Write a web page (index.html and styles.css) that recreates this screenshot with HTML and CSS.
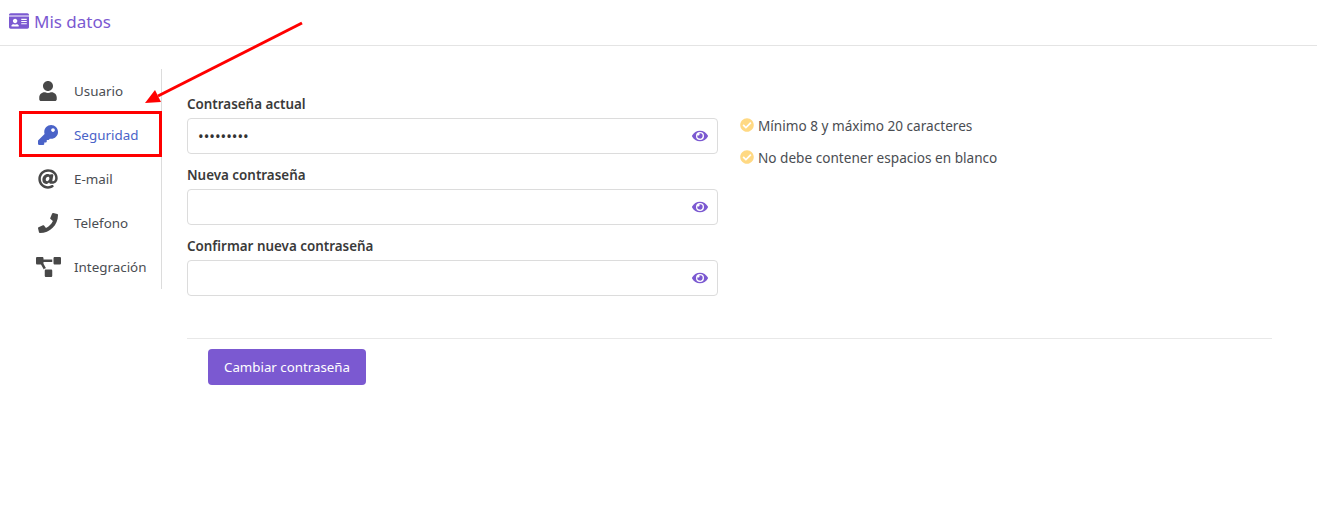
FILE: index.html
```html
<!DOCTYPE html>
<html lang="es">
<head>
    <meta charset="UTF-8">
    <title>Mis datos</title>
    <link rel="stylesheet" href="styles.css">
</head>
<body>
    <header class="page-header">
        <svg class="header-icon" viewBox="0 0 576 512"><path d="M528 32H48C21.5 32 0 53.5 0 80v16h576V80c0-26.5-21.5-48-48-48zM0 432c0 26.5 21.5 48 48 48h480c26.5 0 48-21.5 48-48V128H0v304zm352-232c0-4.4 3.6-8 8-8h144c4.4 0 8 3.6 8 8v16c0 4.4-3.6 8-8 8H360c-4.4 0-8-3.6-8-8v-16zm0 64c0-4.4 3.6-8 8-8h144c4.4 0 8 3.6 8 8v16c0 4.4-3.6 8-8 8H360c-4.4 0-8-3.6-8-8v-16zm0 64c0-4.4 3.6-8 8-8h144c4.4 0 8 3.6 8 8v16c0 4.4-3.6 8-8 8H360c-4.4 0-8-3.6-8-8v-16zM176 192c35.3 0 64 28.7 64 64s-28.7 64-64 64-64-28.7-64-64 28.7-64 64-64zM67.1 396.2C75.5 370.5 99.6 352 128 352h8.2c12.3 5.1 25.7 8 39.8 8s27.6-2.9 39.8-8h8.2c28.4 0 52.5 18.5 60.9 44.2 3.2 9.9-5.2 19.8-15.6 19.8H82.7c-10.4 0-18.8-10-15.6-19.8z"/></svg>
        <span class="header-title">Mis datos</span>
    </header>

    <div class="page-body">
        <nav class="side-menu">
            <a class="menu-item">
                <span class="menu-icon"><svg viewBox="0 0 448 512"><path d="M224 256c70.7 0 128-57.3 128-128S294.7 0 224 0 96 57.3 96 128s57.3 128 128 128zm89.6 32h-16.7c-22.2 10.2-46.9 16-72.9 16s-50.6-5.8-72.9-16h-16.7C60.2 288 0 348.2 0 422.4V464c0 26.5 21.5 48 48 48h352c26.5 0 48-21.5 48-48v-41.6c0-74.2-60.2-134.4-134.4-134.4z"/></svg></span>
                Usuario
            </a>
            <a class="menu-item active">
                <span class="menu-icon"><svg viewBox="0 0 512 512"><path d="M512 176.001C512 273.203 433.202 352 336 352c-11.22 0-22.19-1.062-32.827-3.069l-24.012 27.014A23.999 23.999 0 0 1 261.223 384H224v40c0 13.255-10.745 24-24 24h-40v40c0 13.255-10.745 24-24 24H24c-13.255 0-24-10.745-24-24v-78.059c0-6.365 2.529-12.47 7.029-16.971l161.802-161.802C163.108 213.814 160 195.271 160 176 160 78.798 238.797.001 335.999 0 433.488-.001 512 78.511 512 176.001zM336 128c0 26.51 21.49 48 48 48s48-21.49 48-48-21.49-48-48-48-48 21.49-48 48z"/></svg></span>
                Seguridad
            </a>
            <a class="menu-item">
                <span class="menu-icon"><svg viewBox="0 0 512 512"><path d="M256 8C118.941 8 8 118.919 8 256c0 137.059 110.919 248 248 248 48.154 0 95.342-14.14 135.408-40.223 12.005-7.815 14.625-24.288 5.552-35.372l-10.177-12.433c-7.671-9.371-21.179-11.667-31.373-5.129C325.92 429.757 291.314 440 256 440c-101.458 0-184-82.542-184-184S154.542 72 256 72c100.139 0 184 57.619 184 160 0 38.786-21.093 79.742-58.17 83.693-17.349-.454-16.91-12.857-13.476-30.024l23.433-121.11C394.653 149.75 383.308 136 368.225 136h-44.981a13.518 13.518 0 0 0-13.432 11.993l-.01.092c-14.697-17.901-40.448-21.775-59.971-21.775-74.58 0-137.831 62.234-137.831 151.46 0 65.303 36.785 105.87 96 105.87 26.984 0 57.369-15.637 74.991-38.333 9.522 34.104 40.613 34.103 70.71 34.103C462.609 379.41 504 307.798 504 232 504 95.653 394.023 8 256 8zm-21.68 304.43c-22.249 0-36.07-15.623-36.07-40.771 0-44.993 30.779-72.729 58.63-72.729 22.292 0 35.601 15.241 35.601 40.77 0 45.061-33.875 72.73-58.161 72.73z"/></svg></span>
                E-mail
            </a>
            <a class="menu-item">
                <span class="menu-icon"><svg viewBox="0 0 512 512"><path d="M493.4 24.6l-104-24c-11.3-2.6-22.9 3.3-27.5 13.9l-48 112c-4.2 9.8-1.4 21.3 6.9 28l60.6 49.6c-36 76.7-98.9 140.5-177.2 177.2l-49.6-60.6c-6.8-8.3-18.2-11.1-28-6.9l-112 48C3.9 366.5-2 378.1.6 389.4l24 104C27.1 504.2 36.7 512 48 512c256.1 0 464-207.5 464-464 0-11.2-7.7-20.9-18.6-23.4z"/></svg></span>
                Telefono
            </a>
            <a class="menu-item">
                <span class="menu-icon"><svg class="icon-wide" viewBox="0 0 640 512"><path d="M384 320H256c-17.67 0-32 14.33-32 32v128c0 17.67 14.33 32 32 32h128c17.67 0 32-14.33 32-32V352c0-17.67-14.33-32-32-32zM192 32c0-17.67-14.33-32-32-32H32C14.33 0 0 14.33 0 32v128c0 17.67 14.33 32 32 32h95.72l73.16 128.04C211.98 300.98 232.4 288 256 288h.28L192 175.51V128h224V64H192V32zM608 0H480c-17.67 0-32 14.33-32 32v128c0 17.67 14.33 32 32 32h128c17.67 0 32-14.33 32-32V32c0-17.67-14.33-32-32-32z"/></svg></span>
                Integración
            </a>
        </nav>

        <main class="content">
            <div class="form-row">
                <form class="password-form">
                    <div class="form-group">
                        <label class="form-label">Contraseña actual</label>
                        <div class="input-wrap">
                            <input class="form-input" type="password" value="123456789">
                            <svg class="eye-icon" viewBox="0 0 576 512"><path d="M572.52 241.4C518.29 135.59 410.93 64 288 64S57.68 135.64 3.48 241.41a32.35 32.35 0 0 0 0 29.19C57.71 376.41 165.07 448 288 448s230.32-71.64 284.52-177.41a32.35 32.35 0 0 0 0-29.19zM288 400a144 144 0 1 1 144-144 143.93 143.93 0 0 1-144 144zm0-240a95.31 95.31 0 0 0-25.31 3.79 47.85 47.85 0 0 1-66.9 66.9A95.78 95.78 0 1 0 288 160z"/></svg>
                        </div>
                    </div>
                    <div class="form-group">
                        <label class="form-label">Nueva contraseña</label>
                        <div class="input-wrap">
                            <input class="form-input" type="password">
                            <svg class="eye-icon" viewBox="0 0 576 512"><path d="M572.52 241.4C518.29 135.59 410.93 64 288 64S57.68 135.64 3.48 241.41a32.35 32.35 0 0 0 0 29.19C57.71 376.41 165.07 448 288 448s230.32-71.64 284.52-177.41a32.35 32.35 0 0 0 0-29.19zM288 400a144 144 0 1 1 144-144 143.93 143.93 0 0 1-144 144zm0-240a95.31 95.31 0 0 0-25.31 3.79 47.85 47.85 0 0 1-66.9 66.9A95.78 95.78 0 1 0 288 160z"/></svg>
                        </div>
                    </div>
                    <div class="form-group">
                        <label class="form-label">Confirmar nueva contraseña</label>
                        <div class="input-wrap">
                            <input class="form-input" type="password">
                            <svg class="eye-icon" viewBox="0 0 576 512"><path d="M572.52 241.4C518.29 135.59 410.93 64 288 64S57.68 135.64 3.48 241.41a32.35 32.35 0 0 0 0 29.19C57.71 376.41 165.07 448 288 448s230.32-71.64 284.52-177.41a32.35 32.35 0 0 0 0-29.19zM288 400a144 144 0 1 1 144-144 143.93 143.93 0 0 1-144 144zm0-240a95.31 95.31 0 0 0-25.31 3.79 47.85 47.85 0 0 1-66.9 66.9A95.78 95.78 0 1 0 288 160z"/></svg>
                        </div>
                    </div>
                </form>

                <ul class="rules">
                    <li class="rule">
                        <svg class="rule-icon" viewBox="0 0 512 512"><path d="M504 256c0 136.967-111.033 248-248 248S8 392.967 8 256 119.033 8 256 8s248 111.033 248 248zM227.314 387.314l184-184c6.248-6.248 6.248-16.379 0-22.627l-22.627-22.627c-6.248-6.249-16.379-6.249-22.628 0L216 308.118l-70.059-70.059c-6.248-6.248-16.379-6.248-22.628 0l-22.627 22.627c-6.248 6.248-6.248 16.379 0 22.627l104 104c6.249 6.249 16.379 6.249 22.628.001z"/></svg>
                        Mínimo 8 y máximo 20 caracteres
                    </li>
                    <li class="rule">
                        <svg class="rule-icon" viewBox="0 0 512 512"><path d="M504 256c0 136.967-111.033 248-248 248S8 392.967 8 256 119.033 8 256 8s248 111.033 248 248zM227.314 387.314l184-184c6.248-6.248 6.248-16.379 0-22.627l-22.627-22.627c-6.248-6.249-16.379-6.249-22.628 0L216 308.118l-70.059-70.059c-6.248-6.248-16.379-6.248-22.628 0l-22.627 22.627c-6.248 6.248-6.248 16.379 0 22.627l104 104c6.249 6.249 16.379 6.249 22.628.001z"/></svg>
                        No debe contener espacios en blanco
                    </li>
                </ul>
            </div>

            <div class="form-footer">
                <button class="submit-btn" type="button">Cambiar contraseña</button>
            </div>
        </main>
    </div>

    <!-- annotation drawn over the screenshot -->
    <div class="mark-box"></div>
    <svg class="mark-arrow" viewBox="0 0 320 120" width="320" height="120">
        <line x1="302" y1="23" x2="158" y2="96" stroke="#ff0000" stroke-width="3"/>
        <polygon points="145,103 155,90 161,102" fill="#ff0000"/>
    </svg>
</body>
</html>
```

FILE: styles.css
```css
body {
    margin: 0;
    background: #ffffff;
    color: #3f4144;
    font-family: "Noto Sans", sans-serif;
    font-size: 13.4px;
}

.page-header {
    display: flex;
    align-items: center;
    gap: 5px;
    height: 42px;
    padding-left: 9px;
    padding-bottom: 3px;
    border-bottom: 1px solid #e4e4e4;
}

.header-icon {
    width: 20px;
    height: 18px;
    fill: #7b59d1;
}

.header-title {
    font-size: 17px;
    color: #7b59d1;
}

.page-body {
    display: flex;
    align-items: flex-start;
    padding: 23px 45px 0 19px;
}

.side-menu {
    display: flex;
    flex-direction: column;
    width: 142px;
    border-right: 1px solid #dcdcdc;
    flex-shrink: 0;
}

.menu-item {
    display: flex;
    align-items: center;
    height: 44px;
    color: #4a4d52;
}

.menu-item.active {
    color: #4a63c8;
}

.menu-icon {
    display: flex;
    justify-content: center;
    box-sizing: border-box;
    width: 55px;
    padding-left: 3px;
    fill: #484848;
}

.menu-item.active .menu-icon {
    fill: #4a63c8;
}

.menu-icon svg {
    width: 20px;
    height: 20px;
}

.menu-icon .icon-wide {
    width: 25px;
}

.content {
    flex: 1;
    margin-left: 25px;
}

.form-row {
    display: flex;
    gap: 22px;
    padding-top: 25px;
}

.password-form {
    width: 531px;
}

.form-group {
    margin-bottom: 11px;
}

.form-label {
    display: block;
    height: 24px;
    line-height: 21px;
    font-weight: 600;
    color: #3a3a3a;
}

.input-wrap {
    position: relative;
}

.form-input {
    display: block;
    width: 100%;
    height: 36px;
    box-sizing: border-box;
    padding: 0 40px 0 10px;
    border: 1px solid #dcdcdc;
    border-radius: 4px;
    color: #333333;
    font-family: inherit;
    font-size: 15px;
}

.eye-icon {
    position: absolute;
    top: 10px;
    right: 10px;
    width: 16px;
    height: 16px;
    fill: #7b59d1;
}

.rules {
    list-style: none;
    margin: 0;
    padding: 15px 0 0;
}

.rule {
    display: flex;
    align-items: center;
    gap: 4px;
    height: 32px;
    color: #4a4d52;
    font-size: 13.6px;
}

.rule-icon {
    width: 14px;
    height: 14px;
    fill: #ffd983;
}

.form-footer {
    margin-top: 31px;
    padding: 10px 0 0 21px;
    border-top: 1px solid #e8e8e8;
}

.submit-btn {
    width: 158px;
    height: 36px;
    padding: 0;
    border: none;
    border-radius: 4px;
    background: #7b59d1;
    color: #ffffff;
    font-family: inherit;
    font-size: 13.3px;
}

.mark-box {
    position: absolute;
    left: 19px;
    top: 111px;
    width: 137px;
    height: 40px;
    border: 3px solid #ff0000;
}

.mark-arrow {
    position: absolute;
    left: 0;
    top: 0;
}
```
